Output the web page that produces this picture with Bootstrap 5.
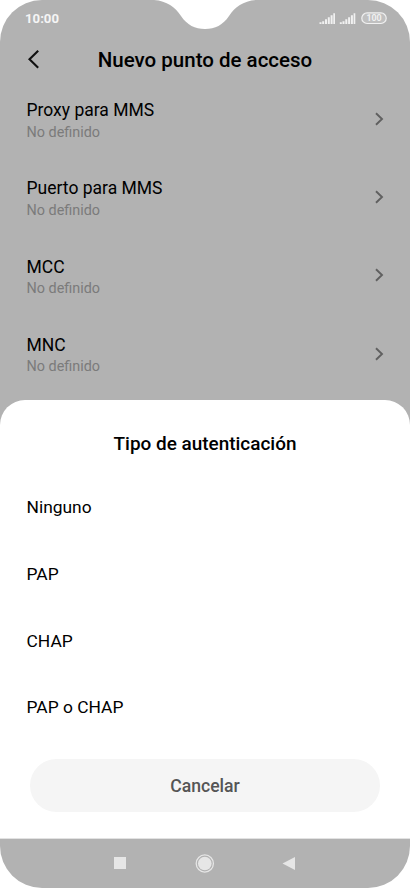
<!DOCTYPE html>
<html lang="es">
<head>
<meta charset="utf-8">
<meta name="viewport" content="width=device-width, initial-scale=1">
<title>Nuevo punto de acceso</title>
<link href="https://cdn.jsdelivr.net/npm/bootstrap@5.3.0/dist/css/bootstrap.min.css" rel="stylesheet">
<style>
body{font-family:Roboto,"Liberation Sans",sans-serif;background:#fff;color:#000}
.phone{width:410px;height:888px;background:#b2b2b2;border-radius:42px}
.notch{left:154px;top:0}
.statusbar{height:36px;padding:0 22px 0 25px;color:#f5f5f5}
.clock{font-size:13.2px;font-weight:700;padding-top:2px}
.topbar{height:48px}
.topbar h1{font-size:20.5px;font-weight:500;line-height:24px}
.back{left:26px;top:12px}
.settings{height:316px}
.setting{height:78.2px;padding:15.2px 26px 0 26.5px}
.setting-name{font-size:17.5px;line-height:22px}
.setting-value{font-size:14.4px;line-height:21px;margin-top:.6px;color:#7b7b7b}
.setting svg{margin-top:12.8px}
.sheet{height:439px;border-radius:25px 25px 0 0;border-bottom:1px solid #e2e2e2}
.sheet h2{font-size:18.95px;font-weight:500;line-height:24px;padding-top:32px;margin-bottom:18px}
.choice{height:66.7px;font-size:17.4px;padding:0 26.5px}
.cancel{width:350px;height:53px;margin-top:18.2px;background:#f5f5f5;color:#555;font-size:17.6px;font-weight:500}
.cancel span{padding-top:2px}
.navkeys{height:49px}
</style>
<script src="https://cdn.jsdelivr.net/npm/bootstrap@5.3.0/dist/js/bootstrap.bundle.min.js"></script>
</head>
<body>
<div class="phone position-relative overflow-hidden d-flex flex-column">
  <svg class="notch position-absolute" width="102" height="30" viewBox="0 0 102 30"><path fill="#fff" d="M0 0C13 1 21 7 27 16C33 25 41 29 51 29C61 29 69 25 75 16C81 7 89 1 102 0Z"/></svg>
  <div class="statusbar d-flex align-items-center justify-content-between">
    <span class="clock">10:00</span>
    <svg width="69" height="14" viewBox="0 0 69 14" fill="#f1f1f1">
      <path id="bars" d="M0.5 11.2h2v1.8H.5zM3.2 10.2h2V13H3.2zM6 8.2h2V13H6zM8.8 6.2h2V13H8.8zM11.6 4.2h2V13h-2zM14.3 2.2h1.7V13h-1.7z"/>
      <use href="#bars" x="20.3"/>
      <rect x="42.8" y="1.9" width="24.4" height="10.6" rx="5.3" fill="#c0c0c0" stroke="#f1f1f1" stroke-width="1.2"/>
      <text x="55" y="10.4" text-anchor="middle" font-size="8.8" font-weight="700">100</text>
    </svg>
  </div>
  <header class="topbar position-relative d-flex align-items-center justify-content-center">
    <svg class="back position-absolute" width="16" height="22" viewBox="0 0 16 22" fill="none" stroke="#111" stroke-width="2.1"><path d="M12.2 2.7L3.5 11.3l8.7 8.4"/></svg>
    <h1 class="m-0">Nuevo punto de acceso</h1>
  </header>
  <main class="settings overflow-hidden">
    <div class="setting d-flex align-items-start justify-content-between"><div><div class="setting-name">Proxy para MMS</div><div class="setting-value">No definido</div></div><svg width="10" height="14" viewBox="0 0 10 14" fill="none" stroke="#606060" stroke-width="1.9"><path d="M2 1.2l6 5.8-6 5.8"/></svg></div>
    <div class="setting d-flex align-items-start justify-content-between"><div><div class="setting-name">Puerto para MMS</div><div class="setting-value">No definido</div></div><svg width="10" height="14" viewBox="0 0 10 14" fill="none" stroke="#606060" stroke-width="1.9"><path d="M2 1.2l6 5.8-6 5.8"/></svg></div>
    <div class="setting d-flex align-items-start justify-content-between"><div><div class="setting-name">MCC</div><div class="setting-value">No definido</div></div><svg width="10" height="14" viewBox="0 0 10 14" fill="none" stroke="#606060" stroke-width="1.9"><path d="M2 1.2l6 5.8-6 5.8"/></svg></div>
    <div class="setting d-flex align-items-start justify-content-between"><div><div class="setting-name">MNC</div><div class="setting-value">No definido</div></div><svg width="10" height="14" viewBox="0 0 10 14" fill="none" stroke="#606060" stroke-width="1.9"><path d="M2 1.2l6 5.8-6 5.8"/></svg></div>
  </main>
  <section class="sheet bg-white flex-shrink-0">
    <h2 class="text-center">Tipo de autenticación</h2>
    <div class="choice d-flex align-items-center">Ninguno</div>
    <div class="choice d-flex align-items-center">PAP</div>
    <div class="choice d-flex align-items-center">CHAP</div>
    <div class="choice d-flex align-items-center">PAP o CHAP</div>
    <button class="cancel btn rounded-pill border-0 d-flex align-items-center justify-content-center mx-auto p-0"><span>Cancelar</span></button>
  </section>
  <nav class="navkeys d-flex justify-content-center">
    <svg width="190" height="49" viewBox="110 839 190 49" fill="#e6e6e6"><rect x="114" y="857" width="12" height="12"/><circle cx="204.8" cy="863.5" r="6.8"/><circle cx="204.8" cy="863.5" r="8.6" fill="none" stroke="#e6e6e6" stroke-width="1.3"/><path d="M282.5 863.5L295 857v13z"/></svg>
  </nav>
</div>
</body>
</html>
